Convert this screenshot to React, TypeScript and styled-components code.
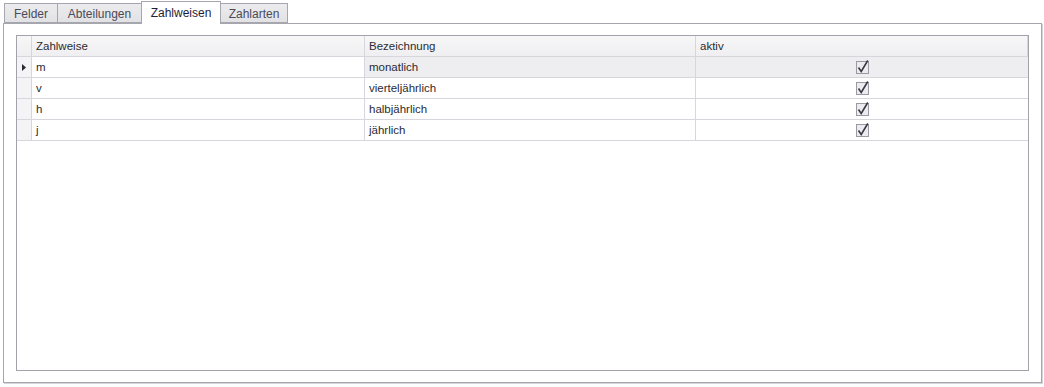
import { FC, Fragment } from 'react'
import styled, { createGlobalStyle } from 'styled-components'

const GlobalStyle = createGlobalStyle`
	body {
		margin: 0;
		background: #ffffff;
		font-family: 'Liberation Sans', Arial, sans-serif;
		font-size: 11.5px;
		color: #2b2b33;
	}
`

const Page = styled.div`
	width: 1044px;
	height: 387px;
	display: flex;
	flex-direction: column;
	box-sizing: border-box;
	padding: 1px 2px 4px 3px;
`

const TabStrip = styled.div`
	display: flex;
	align-items: flex-end;
	height: 22px;
	padding-left: 1px;
	position: relative;
	z-index: 1;
`

const Tab = styled.div<{ $active?: boolean; $width: number }>`
	box-sizing: border-box;
	width: ${(p) => p.$width}px;
	height: ${(p) => (p.$active ? '23px' : '20px')};
	margin-bottom: ${(p) => (p.$active ? '-1px' : '0')};
	display: flex;
	align-items: center;
	justify-content: center;
	border: 1px solid #a6a6ae;
	border-bottom: ${(p) => (p.$active ? 'none' : '1px solid #a6a6ae')};
	margin-right: -1px;
	background: ${(p) =>
		p.$active ? '#ffffff' : 'linear-gradient(#ececee, #e2e2e6)'};
	color: ${(p) => (p.$active ? '#1e1e3c' : '#4a4a58')};
	font-size: 12px;
	padding-top: ${(p) => (p.$active ? '0' : '1px')};
`

const Panel = styled.div`
	flex: 1;
	display: flex;
	box-sizing: border-box;
	border: 1px solid #a6a6ae;
	box-shadow: 1px 1px 0 #d4d4da;
	padding: 11px 12px 11px 12px;
	background: #ffffff;
`

const Grid = styled.div`
	flex: 1;
	border: 1px solid #a2a2aa;
	display: grid;
	grid-template-columns: 15px 333px 331px 1fr;
	grid-auto-rows: 21px;
	align-content: start;
`

const HeadCell = styled.div`
	display: flex;
	align-items: center;
	padding-left: 4px;
	background: linear-gradient(#f7f7f8, #efeff1);
	border-right: 1px solid #d6d6dc;
	border-bottom: 1px solid #d6d6dc;
	color: #2b2b33;
	&:last-child {
		border-right: none;
	}
`

const Indicator = styled.div`
	display: flex;
	align-items: center;
	justify-content: center;
	background: #f4f4f6;
	border-right: 1px solid #d6d6dc;
	border-bottom: 1px solid #d6d6dc;
`

const Cell = styled.div<{ $shaded?: boolean; $center?: boolean; $last?: boolean }>`
	display: flex;
	align-items: center;
	justify-content: ${(p) => (p.$center ? 'center' : 'flex-start')};
	padding-left: ${(p) => (p.$center ? '0' : '4px')};
	background: ${(p) => (p.$shaded ? '#eeeef0' : '#ffffff')};
	border-right: ${(p) => (p.$last ? 'none' : '1px solid #d6d6dc')};
	border-bottom: 1px solid #d6d6dc;
`

const CheckBox: FC = () => (
	<svg width="14" height="14" viewBox="0 0 14 14" style={{ marginLeft: 2 }}>
		<rect x="0.5" y="1.5" width="12" height="12" fill="#ececf0" stroke="#9a9aa4" />
		<path d="M2.5 7.5 L5.2 11.5 L11.8 0.5" fill="none" stroke="#3a3a44" strokeWidth="1.6" />
	</svg>
)

const Arrow: FC = () => (
	<svg width="4" height="7" viewBox="0 0 4 7">
		<path d="M0 0 L4 3.5 L0 7 Z" fill="#2b2b33" />
	</svg>
)

const tabs = [
	{ label: 'Felder', width: 54 },
	{ label: 'Abteilungen', width: 85 },
	{ label: 'Zahlweisen', width: 80 },
	{ label: 'Zahlarten', width: 68 },
]

const rows = [
	{ code: 'm', name: 'monatlich' },
	{ code: 'v', name: 'vierteljährlich' },
	{ code: 'h', name: 'halbjährlich' },
	{ code: 'j', name: 'jährlich' },
]

const App: FC = () => {
	return (
		<Page>
			<GlobalStyle />
			<TabStrip>
				{tabs.map((t) => (
					<Tab key={t.label} $width={t.width} $active={t.label === 'Zahlweisen'}>
						{t.label}
					</Tab>
				))}
			</TabStrip>
			<Panel>
				<Grid>
					<HeadCell />
					<HeadCell>Zahlweise</HeadCell>
					<HeadCell>Bezeichnung</HeadCell>
					<HeadCell>aktiv</HeadCell>
					{rows.map((r, i) => (
						<Fragment key={r.code}>
							<Indicator>{i === 0 && <Arrow />}</Indicator>
							<Cell>{r.code}</Cell>
							<Cell $shaded={i === 0}>{r.name}</Cell>
							<Cell $shaded={i === 0} $center $last>
								<CheckBox />
							</Cell>
						</Fragment>
					))}
				</Grid>
			</Panel>
		</Page>
	)
}

export default App
